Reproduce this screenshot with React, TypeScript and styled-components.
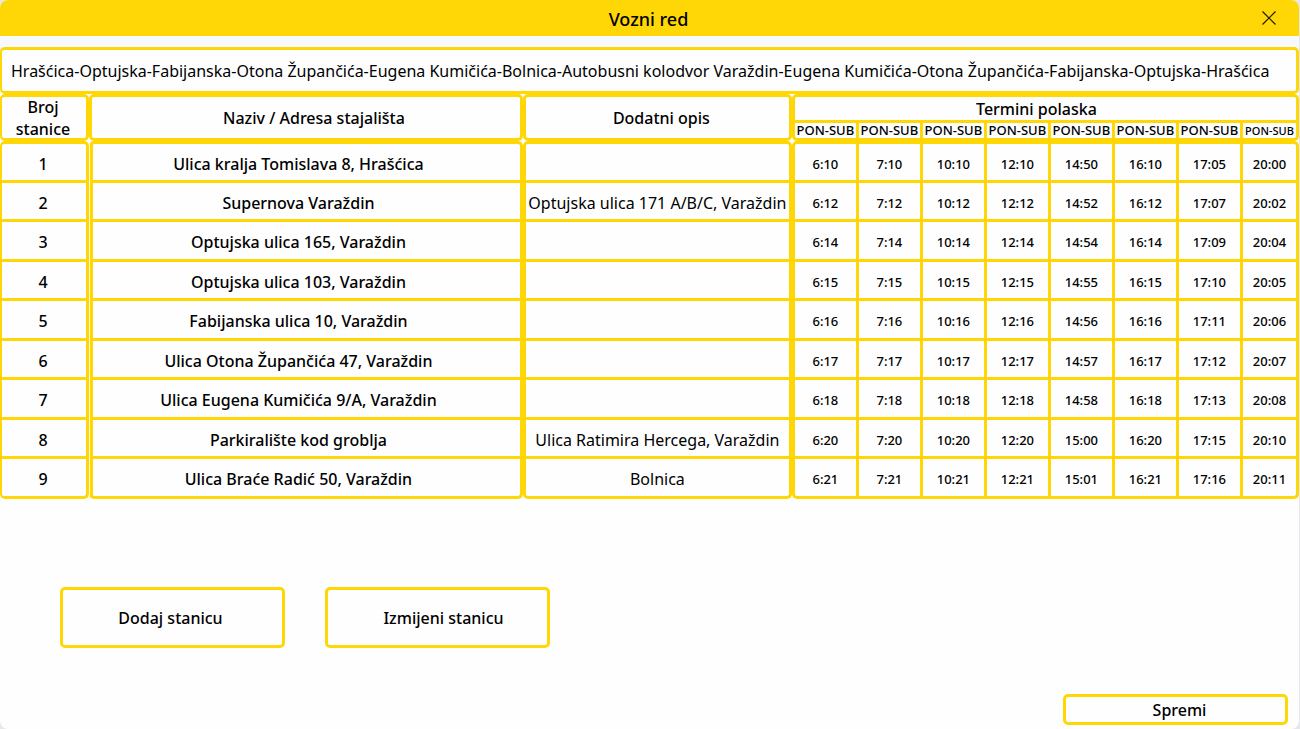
import React from "react";
import styled, { createGlobalStyle } from "styled-components";

const YELLOW = "#ffd707";

const GlobalStyle = createGlobalStyle`
  *, *::before, *::after { box-sizing: border-box; }
  body {
    margin: 0;
    background: #e6e7ea;
    color: #000;
    font-family: "Noto Sans", sans-serif;
    font-size: 16px;
    font-weight: 500;
  }
`;

const Window = styled.main`
  display: flex;
  flex-direction: column;
  min-height: 100vh;
  margin-right: 1px;
  background: #fefefe;
  border-radius: 8px;
  overflow: hidden;
`;

const TitleBar = styled.header`
  display: grid;
  grid-template-columns: 46px 1fr 46px;
  align-items: center;
  height: 36px;
  background: ${YELLOW};
`;

const Title = styled.h1`
  grid-column: 2;
  margin: 0;
  padding: 2px 2px 0 0;
  text-align: center;
  font-size: 18px;
  line-height: 24px;
  font-weight: 500;
`;

const CloseButton = styled.button`
  display: grid;
  place-items: center;
  width: 32px;
  height: 32px;
  padding: 0;
  border: 0;
  background: transparent;
  color: #1c1a00;
  cursor: pointer;
`;

const RouteStrip = styled.section`
  padding-top: 11px;
  background: #f8f9fc;
`;

const Route = styled.p`
  margin: 0;
  padding: 10px 8px 8px 9px;
  border: 3px solid ${YELLOW};
  border-left-width: 2px;
  border-radius: 5px;
  background: #fefefe;
  font-size: 16px;
  line-height: 23px;
  font-weight: 400;
`;

const Timetable = styled.table`
  width: 100%;
  table-layout: fixed;
  border-collapse: separate;
  border-spacing: 0;
`;

const Col = styled.col<{ $width?: string }>`
  width: ${(p) => p.$width ?? "auto"};
`;

const HeadCell = styled.th<{ $left?: number; $right?: number }>`
  padding: 0 ${(p) => p.$right ?? 0}px 0 ${(p) => p.$left ?? 0}px;
  border: 3px solid ${YELLOW};
  border-radius: 5px;
  font-weight: 500;
  line-height: 22px;

  &:first-child { border-left-width: 2px; }
`;

const HeadLabel = styled.span`
  display: block;
  margin: -2px 0;
`;

const TermsHead = styled(HeadCell)`
  height: 29px;
  border-radius: 5px 5px 0 0;
`;

const DayHead = styled.th<{ $small?: boolean }>`
  height: 18px;
  padding: 0;
  border: solid ${YELLOW};
  border-width: 0 3px 3px 0;
  font-size: ${(p) => (p.$small ? 11 : 13)}px;
  line-height: 15px;
  font-weight: 500;
  white-space: nowrap;

  &:first-child {
    border-left-width: 3px;
    border-bottom-left-radius: 5px;
  }
  &:last-child {
    border-bottom-right-radius: 5px;
  }
`;

const Cell = styled.td`
  height: 40px;
  padding: 3px 0 0;
  border: solid ${YELLOW};
  border-width: 0 3px 3px;
  text-align: center;
  line-height: 22px;
`;

const NumberCell = styled(Cell)`
  padding-right: 2px;
  border-left-width: 2px;
`;

const NoteCell = styled(Cell)`
  font-weight: 400;
`;

const NameCell = styled(Cell)`
  position: relative;
  padding-right: 16px;
  border-left-width: 4px;

  &::before {
    content: "";
    position: absolute;
    top: 0;
    bottom: -3px;
    left: -4px;
    width: 1px;
    background: #fffbe0;
  }
`;

const TimeCell = styled(Cell)<{ $first: boolean }>`
  border-left-width: ${(p) => (p.$first ? 3 : 0)}px;
  font-size: 13px;
`;

const StopRow = styled.tr`
  &:nth-child(even) > td { height: 39px; }

  &:first-child > td {
    height: 42px;
    border-top-width: 3px;
  }
  &:first-child > td:nth-child(-n + 4) { border-top-left-radius: 5px; }
  &:first-child > td:nth-child(-n + 3),
  &:first-child > td:last-child { border-top-right-radius: 5px; }

  &:last-child > td:nth-child(-n + 4) { border-bottom-left-radius: 5px; }
  &:last-child > td:nth-child(-n + 3),
  &:last-child > td:last-child { border-bottom-right-radius: 5px; }
`;

const Actions = styled.div`
  display: flex;
  flex-wrap: wrap;
  gap: 40px;
  padding: 88px 60px 40px;
`;

const Button = styled.button<{ $height: number; $left?: number; $right?: number }>`
  width: 225px;
  height: ${(p) => p.$height}px;
  padding: 0 ${(p) => p.$right ?? 0}px 0 ${(p) => p.$left ?? 0}px;
  border: 3px solid ${YELLOW};
  border-radius: 5px;
  background: #fefefe;
  color: inherit;
  font: inherit;
  line-height: 22px;
  cursor: pointer;
`;

const Footer = styled.footer`
  display: flex;
  justify-content: flex-end;
  margin-top: auto;
  padding: 0 11px 4px;
`;

const times = (list: string) => list.split(" ");

const stops = [
  { name: "Ulica kralja Tomislava 8, Hrašćica", note: "", times: times("6:10 7:10 10:10 12:10 14:50 16:10 17:05 20:00") },
  { name: "Supernova Varaždin", note: "Optujska ulica 171 A/B/C, Varaždin", times: times("6:12 7:12 10:12 12:12 14:52 16:12 17:07 20:02") },
  { name: "Optujska ulica 165, Varaždin", note: "", times: times("6:14 7:14 10:14 12:14 14:54 16:14 17:09 20:04") },
  { name: "Optujska ulica 103, Varaždin", note: "", times: times("6:15 7:15 10:15 12:15 14:55 16:15 17:10 20:05") },
  { name: "Fabijanska ulica 10, Varaždin", note: "", times: times("6:16 7:16 10:16 12:16 14:56 16:16 17:11 20:06") },
  { name: "Ulica Otona Župančića 47, Varaždin", note: "", times: times("6:17 7:17 10:17 12:17 14:57 16:17 17:12 20:07") },
  { name: "Ulica Eugena Kumičića 9/A, Varaždin", note: "", times: times("6:18 7:18 10:18 12:18 14:58 16:18 17:13 20:08") },
  { name: "Parkiralište kod groblja", note: "Ulica Ratimira Hercega, Varaždin", times: times("6:20 7:20 10:20 12:20 15:00 16:20 17:15 20:10") },
  { name: "Ulica Braće Radić 50, Varaždin", note: "Bolnica", times: times("6:21 7:21 10:21 12:21 15:01 16:21 17:16 20:11") },
];

const termWidths = ["67px", "64px", "64px", "64px", "64px", "64px", "64px", "56px"];

export default function App() {
  return (
    <>
      <GlobalStyle />
      <Window>
        <TitleBar>
          <Title>Vozni red</Title>
          <CloseButton type="button" aria-label="Zatvori">
            <svg width="14" height="14" viewBox="0 0 14 14" fill="none" stroke="currentColor" strokeWidth="1.2">
              <path d="M0.5 0.5L13.5 13.5M13.5 0.5L0.5 13.5" />
            </svg>
          </CloseButton>
        </TitleBar>

        <RouteStrip>
          <Route>
            Hrašćica-Optujska-Fabijanska-Otona Župančića-Eugena Kumičića-Bolnica-Autobusni kolodvor
            Varaždin-Eugena Kumičića-Otona Župančića-Fabijanska-Optujska-Hrašćica
          </Route>
        </RouteStrip>

        <Timetable>
          <colgroup>
            <Col $width="89px" />
            <Col />
            <Col $width="269px" />
            {termWidths.map((w, i) => (
              <Col key={i} $width={w} />
            ))}
          </colgroup>
          <thead>
            <tr>
              <HeadCell rowSpan={2} scope="col" $right={2}>
                <HeadLabel>Broj stanice</HeadLabel>
              </HeadCell>
              <HeadCell rowSpan={2} scope="col" $left={16}>
                <HeadLabel>Naziv / Adresa stajališta</HeadLabel>
              </HeadCell>
              <HeadCell rowSpan={2} scope="col" $left={8}>
                <HeadLabel>Dodatni opis</HeadLabel>
              </HeadCell>
              <TermsHead colSpan={8} scope="colgroup" $right={18}>Termini polaska</TermsHead>
            </tr>
            <tr>
              {termWidths.map((_, i) => (
                <DayHead key={i} scope="col" $small={i === termWidths.length - 1}>PON-SUB</DayHead>
              ))}
            </tr>
          </thead>
          <tbody>
            {stops.map((stop, i) => (
              <StopRow key={stop.name}>
                <NumberCell>{i + 1}</NumberCell>
                <NameCell>{stop.name}</NameCell>
                <NoteCell>{stop.note}</NoteCell>
                {stop.times.map((t, j) => (
                  <TimeCell key={t} $first={j === 0}>{t}</TimeCell>
                ))}
              </StopRow>
            ))}
          </tbody>
        </Timetable>

        <Actions>
          <Button type="button" $height={61} $right={4}>Dodaj stanicu</Button>
          <Button type="button" $height={61} $left={12}>Izmijeni stanicu</Button>
        </Actions>

        <Footer>
          <Button type="button" $height={31} $left={8}>Spremi</Button>
        </Footer>
      </Window>
    </>
  );
}
